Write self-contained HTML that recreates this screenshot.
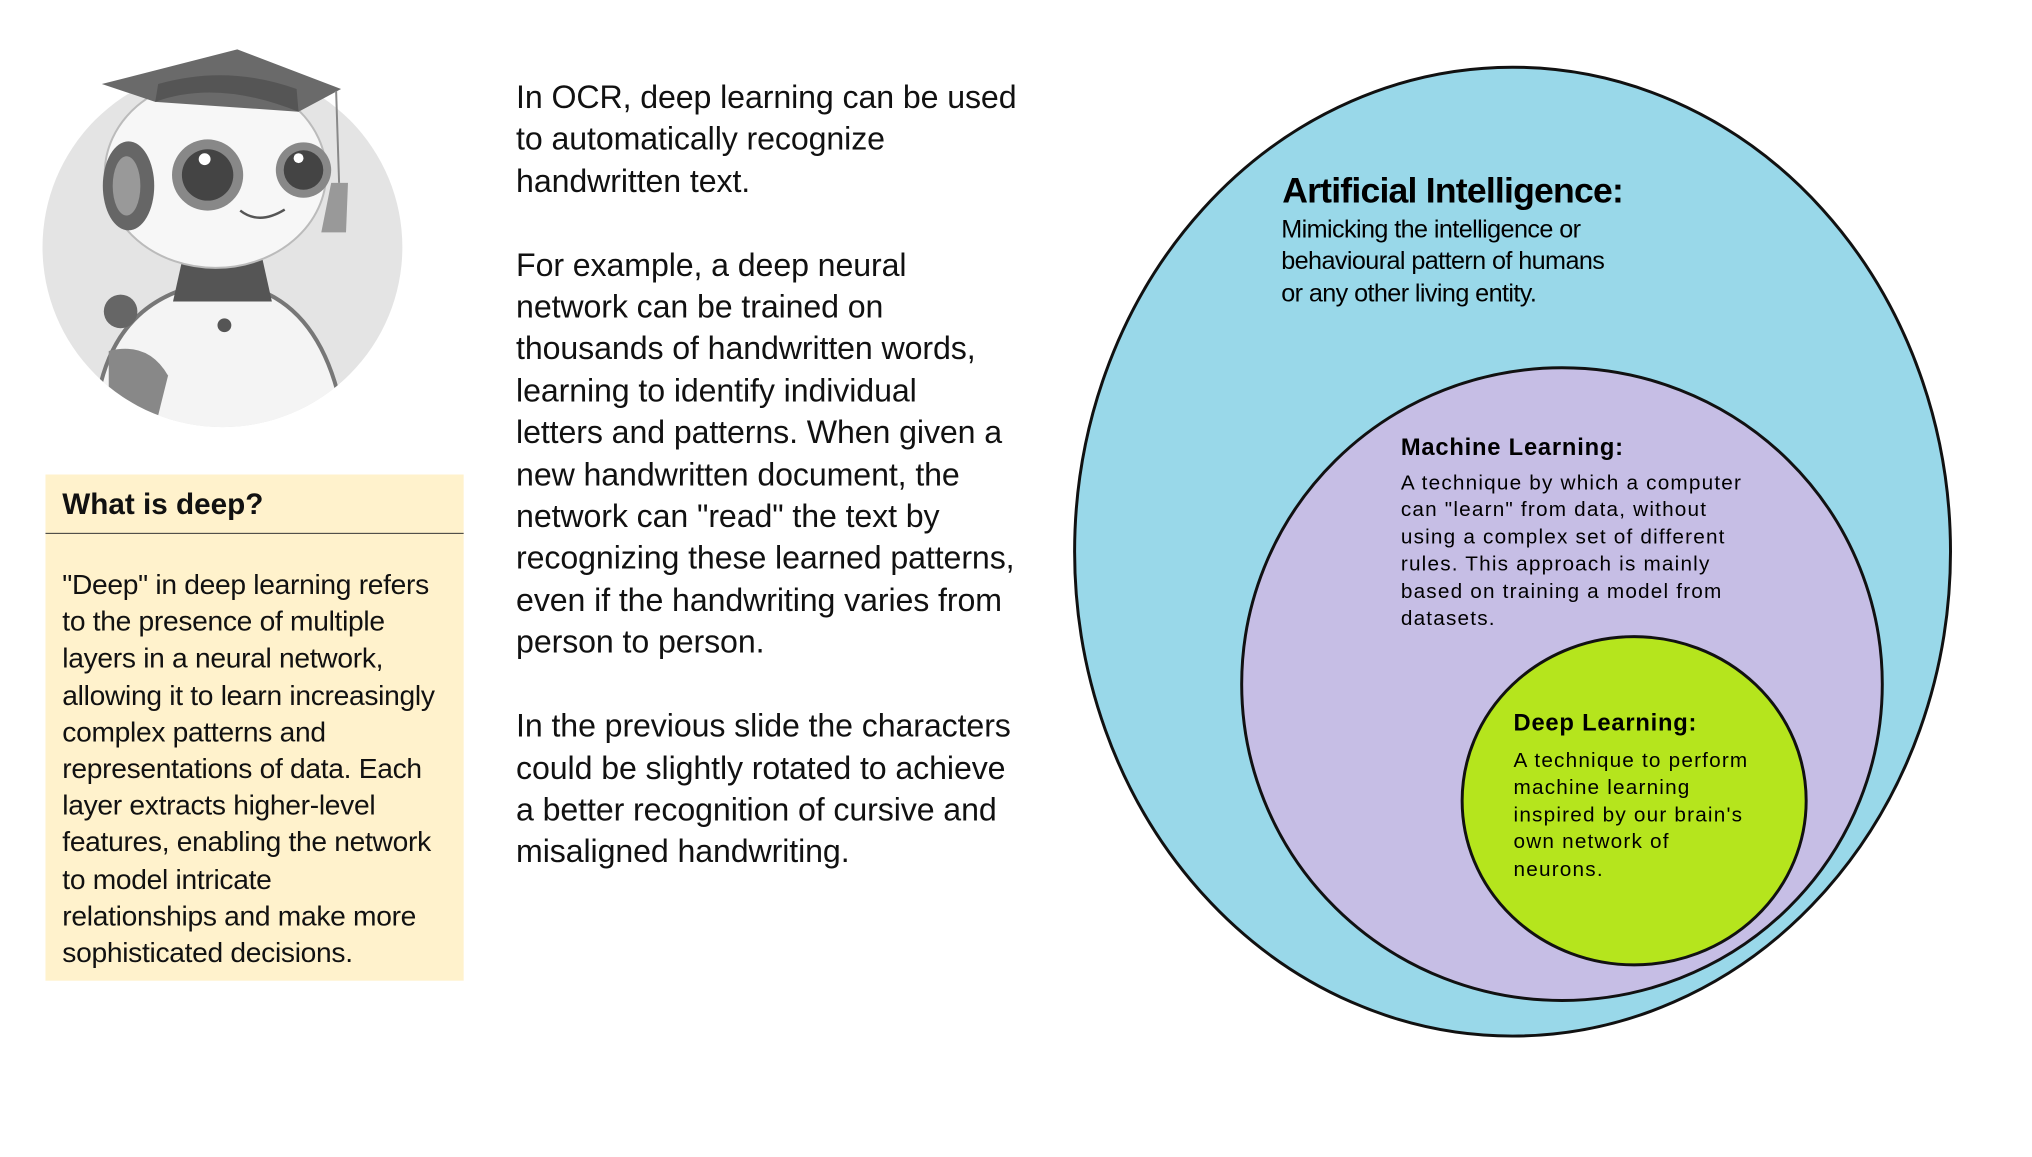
<!DOCTYPE html>
<html><head><meta charset="utf-8"><style>
html,body{margin:0;padding:0;background:#fff;width:2032px;height:1148px;overflow:hidden;font-family:"Liberation Sans",sans-serif}
#w{position:absolute;left:0;top:0;width:2060px;height:1170px;transform:scale(0.9886);transform-origin:0 0}
.mid{position:absolute;left:522px;top:77px;font-size:32.5px;line-height:42.4px;color:#111;white-space:pre;letter-spacing:-0.1px}
.box{position:absolute;left:46px;top:480px;width:423px;height:512px;background:#fff2cc}
.box h2{margin:0;position:absolute;left:17px;top:14px;font-size:30px;font-weight:bold;color:#111}
.box .ln{position:absolute;left:0;top:59px;width:423px;height:1px;background:#333}
.box .bd{position:absolute;left:17px;top:94px;font-size:28.5px;line-height:37.2px;color:#111;white-space:pre;letter-spacing:-0.3px}
svg{position:absolute;left:0;top:0}
</style></head><body><div id="w">
<svg width="2060" height="1170">
<defs><clipPath id="cc"><circle cx="225" cy="250" r="182"/></clipPath></defs>
<circle cx="225" cy="250" r="182" fill="#e4e4e4"/>
<g clip-path="url(#cc)">
<path d="M95 440 Q100 300 220 285 Q330 290 350 440 Z" fill="#f4f4f4" stroke="#777" stroke-width="4"/>
<path d="M185 260 L265 260 L275 305 L175 305 Z" fill="#555"/>
<circle cx="122" cy="315" r="17" fill="#666"/>
<path d="M110 355 Q150 345 170 380 L160 420 L110 420 Z" fill="#888"/>
<circle cx="227" cy="329" r="7" fill="#555"/>
</g>
<ellipse cx="218" cy="175" rx="112" ry="96" fill="#f7f7f7" stroke="#bbb" stroke-width="2"/>
<ellipse cx="130" cy="188" rx="26" ry="45" fill="#666"/>
<ellipse cx="128" cy="188" rx="14" ry="30" fill="#999"/>
<circle cx="210" cy="177" r="36" fill="#888"/>
<circle cx="210" cy="177" r="26" fill="#444"/>
<circle cx="207" cy="161" r="6" fill="#fff"/>
<circle cx="307" cy="172" r="28" fill="#888"/>
<circle cx="307" cy="172" r="20" fill="#444"/>
<circle cx="302" cy="160" r="5" fill="#fff"/>
<path d="M243 213 Q262 228 288 212" fill="none" stroke="#555" stroke-width="2.5"/>
<path d="M103 85 L240 50 L345 90 L302 113 L157 103 Z" fill="#6a6a6a"/>
<path d="M157 103 Q220 80 302 113 L300 90 Q230 65 160 85 Z" fill="#555"/>
<path d="M340 92 L343 185" stroke="#888" stroke-width="2"/>
<path d="M335 185 L352 185 L350 235 L325 235 Z" fill="#999"/>

<ellipse cx="1530" cy="558" rx="443" ry="490" fill="#99d8e9" stroke="#111" stroke-width="3"/>
<ellipse cx="1580" cy="692" rx="324" ry="320" fill="#c6bee5" stroke="#111" stroke-width="3"/>
<ellipse cx="1653" cy="810" rx="174" ry="166" fill="#b5e51d" stroke="#111" stroke-width="3"/>
<g font-family="Liberation Sans, sans-serif" fill="#000">
<text x="1297" y="205" font-size="36" font-weight="bold" letter-spacing="-0.8">Artificial Intelligence:</text>
<text font-size="25.5" letter-spacing="-0.6"><tspan x="1296" y="240">Mimicking the intelligence or</tspan><tspan x="1296" y="272">behavioural pattern of humans</tspan><tspan x="1296" y="305">or any other living entity.</tspan></text>
<text x="1417" y="460" font-size="24" font-weight="bold" letter-spacing="0.8">Machine Learning:</text>
<text font-size="21" letter-spacing="1.2"><tspan x="1417" y="495">A technique by which a computer</tspan><tspan x="1417" y="522">can "learn" from data, without</tspan><tspan x="1417" y="550">using a complex set of different</tspan><tspan x="1417" y="577">rules. This approach is mainly</tspan><tspan x="1417" y="605">based on training a model from</tspan><tspan x="1417" y="632">datasets.</tspan></text>
<text x="1531" y="739" font-size="24" font-weight="bold" letter-spacing="0.8">Deep Learning:</text>
<text font-size="21" letter-spacing="1.2"><tspan x="1531" y="776">A technique to perform</tspan><tspan x="1531" y="803">machine learning</tspan><tspan x="1531" y="831">inspired by our brain's</tspan><tspan x="1531" y="858">own network of</tspan><tspan x="1531" y="886">neurons.</tspan></text>
</g>
</svg>
<div class="box"><h2>What is deep?</h2><div class="ln"></div><div class="bd">"Deep" in deep learning refers
to the presence of multiple
layers in a neural network,
allowing it to learn increasingly
complex patterns and
representations of data. Each
layer extracts higher-level
features, enabling the network
to model intricate
relationships and make more
sophisticated decisions.</div></div>
<div class="mid">In OCR, deep learning can be used
to automatically recognize
handwritten text.

For example, a deep neural
network can be trained on
thousands of handwritten words,
learning to identify individual
letters and patterns. When given a
new handwritten document, the
network can "read" the text by
recognizing these learned patterns,
even if the handwriting varies from
person to person.

In the previous slide the characters
could be slightly rotated to achieve
a better recognition of cursive and
misaligned handwriting.</div>
</div></body></html>
